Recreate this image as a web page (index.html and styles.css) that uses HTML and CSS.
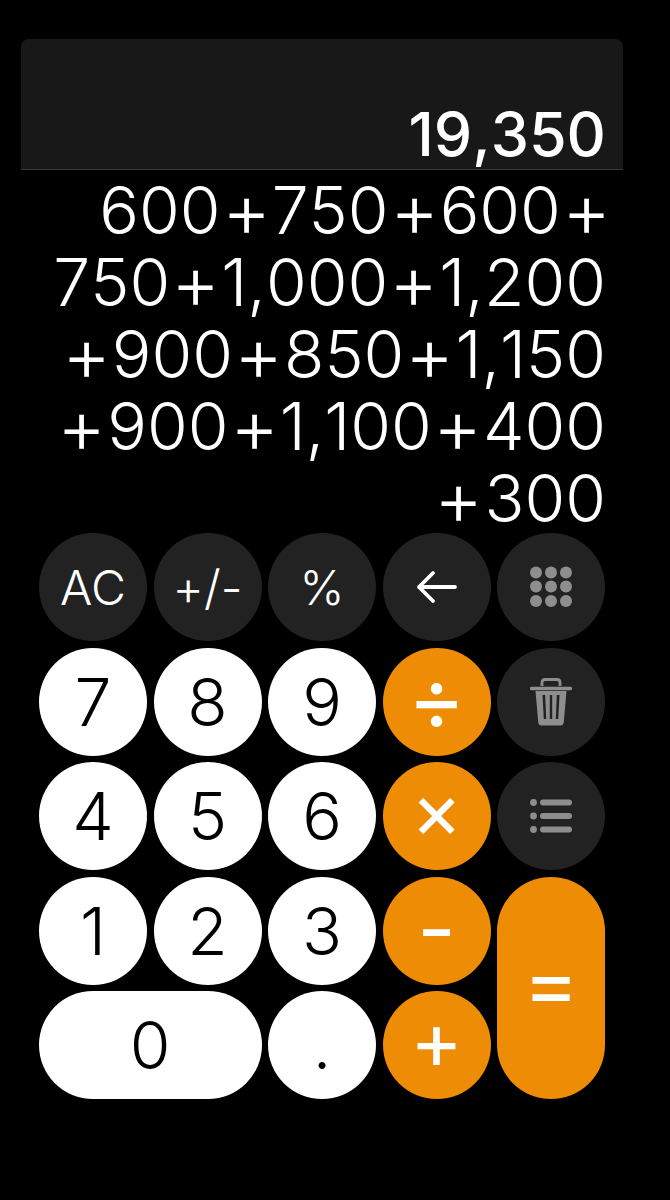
FILE: index.html
```html
<!DOCTYPE html>
<html lang="en">
<head>
<meta charset="utf-8">
<title>Calculator</title>
<link rel="stylesheet" href="styles.css">
</head>
<body>
<main class="calc">
  <section class="result"><span class="result-text">19,350</span></section>
  <section class="expr">
    <div>600<i>+</i>750<i>+</i>600<i class="end">+</i></div>
    <div>750<i>+</i>1,000<i>+</i>1,200</div>
    <div><i>+</i>900<i>+</i>850<i>+</i>1,150</div>
    <div><i>+</i>900<i>+</i>1,100<i>+</i>400</div>
    <div><i>+</i>300</div>
  </section>
  <section class="keys">
    <button class="key fn">AC</button>
    <button class="key fn">+/-</button>
    <button class="key fn">%</button>
    <button class="key fn" aria-label="Backspace">
      <svg class="ico" width="42" height="34" viewBox="0 0 42 34"><path d="M3 17H39M17 3 3 17l14 14" fill="none" stroke="#fff" stroke-width="3.800" stroke-linecap="round" stroke-linejoin="round"/></svg>
    </button>
    <button class="key fn" aria-label="Keypad">
      <svg class="ico" width="42" height="42" viewBox="0 0 42 42" fill="#8e8e8e"><circle cx="6" cy="6.500" r="6"/><circle cx="21" cy="6.500" r="6"/><circle cx="36" cy="6.500" r="6"/><circle cx="6" cy="20.500" r="6"/><circle cx="21" cy="20.500" r="6"/><circle cx="36" cy="20.500" r="6"/><circle cx="6" cy="35" r="6"/><circle cx="21" cy="35" r="6"/><circle cx="36" cy="35" r="6"/></svg>
    </button>

    <button class="key num">7</button>
    <button class="key num">8</button>
    <button class="key num">9</button>
    <button class="key op div">÷</button>
    <button class="key fn" aria-label="Delete">
      <svg class="ico" width="42" height="48" viewBox="0 0 42 48"><path d="M12 8V4.500q0-3 3-3h12q3 0 3 3V8" fill="none" stroke="#8e8e8e" stroke-width="2.800"/><path d="M1.500 10.500h39" stroke="#8e8e8e" stroke-width="3.400" stroke-linecap="round"/><path fill-rule="evenodd" fill="#8e8e8e" d="M5.500 13h31l-2.700 31q-.3 3.500-3.500 3.500H11.700q-3.200 0-3.500-3.500ZM12.500 17l1.300 24h2.400l-1-24ZM19.800 17v24h2.400V17ZM26.800 17l-1 24h2.400l1.300-24Z"/></svg>
    </button>

    <button class="key num">4</button>
    <button class="key num">5</button>
    <button class="key num">6</button>
    <button class="key op mul">×</button>
    <button class="key fn" aria-label="History">
      <svg class="ico" width="42" height="34" viewBox="0 0 42 34" fill="#8e8e8e"><circle cx="3.500" cy="3.500" r="3.400"/><circle cx="3.500" cy="17" r="3.400"/><circle cx="3.500" cy="30.500" r="3.400"/><rect x="10" y="0.500" width="32" height="6" rx="3"/><rect x="10" y="14" width="32" height="6" rx="3"/><rect x="10" y="27.500" width="32" height="6" rx="3"/></svg>
    </button>

    <button class="key num">1</button>
    <button class="key num">2</button>
    <button class="key num">3</button>
    <button class="key op minus">-</button>
    <button class="key op eq">=</button>

    <button class="key num zero">0</button>
    <button class="key num dot">.</button>
    <button class="key op plus">+</button>
  </section>
</main>
</body>
</html>
```
FILE: styles.css
```css
* { box-sizing: border-box; }
html, body { margin: 0; background: #000; }
body { width: 670px; height: 1200px; overflow: hidden; font-family: Inter, "Liberation Sans", Arial, sans-serif; color: #fff; font-kerning: none; }
.calc { padding-top: 39px; }
.result {
  margin-left: 21px; width: 602px; height: 131px;
  background: #181818; border-bottom: 1px solid #3a3a3a;
  border-radius: 8px 8px 0 0;
  display: flex; justify-content: flex-end; align-items: flex-end;
  padding: 0 17px 2px 0;
}
.result-text { font-size: 61px; font-weight: 500; line-height: 66px; }
.expr {
  width: 606px; padding-top: 4px; text-align: right;
  font-size: 66px; font-weight: 300; line-height: 72px; height: 363px;
}
.expr div { white-space: nowrap; }
.expr i { display: inline-block; font-style: normal; margin: 0 4px; transform: scale(1.14); }
.expr i.end { margin-right: -2px; }
.keys {
  margin-left: 39px; width: 566px;
  display: grid; grid-template-columns: repeat(5, 108px); grid-auto-rows: 108px; gap: 6.500px;
}
.key {
  border: 0; padding: 0; margin: 0; border-radius: 54px;
  font-family: inherit; display: flex; align-items: center; justify-content: center;
}
.fn { background: #222; color: #fff; font-size: 48px; font-weight: 350; }
.num { background: #fff; color: #000; font-size: 66px; font-weight: 300; }
.op { background: #ee8c05; color: #fff; font-weight: 400; }
.div { font-size: 88px; padding-bottom: 8px; }
.mul { font-size: 78px; padding-bottom: 14px; }
.minus { font-size: 84px; padding-bottom: 4px; }
.plus { font-size: 80px; padding-bottom: 12px; }
.eq { grid-column: 5; grid-row: 4 / span 2; font-size: 84px; padding-bottom: 10px; }
.zero { grid-column: span 2; }
.ico { display: block; }
```
